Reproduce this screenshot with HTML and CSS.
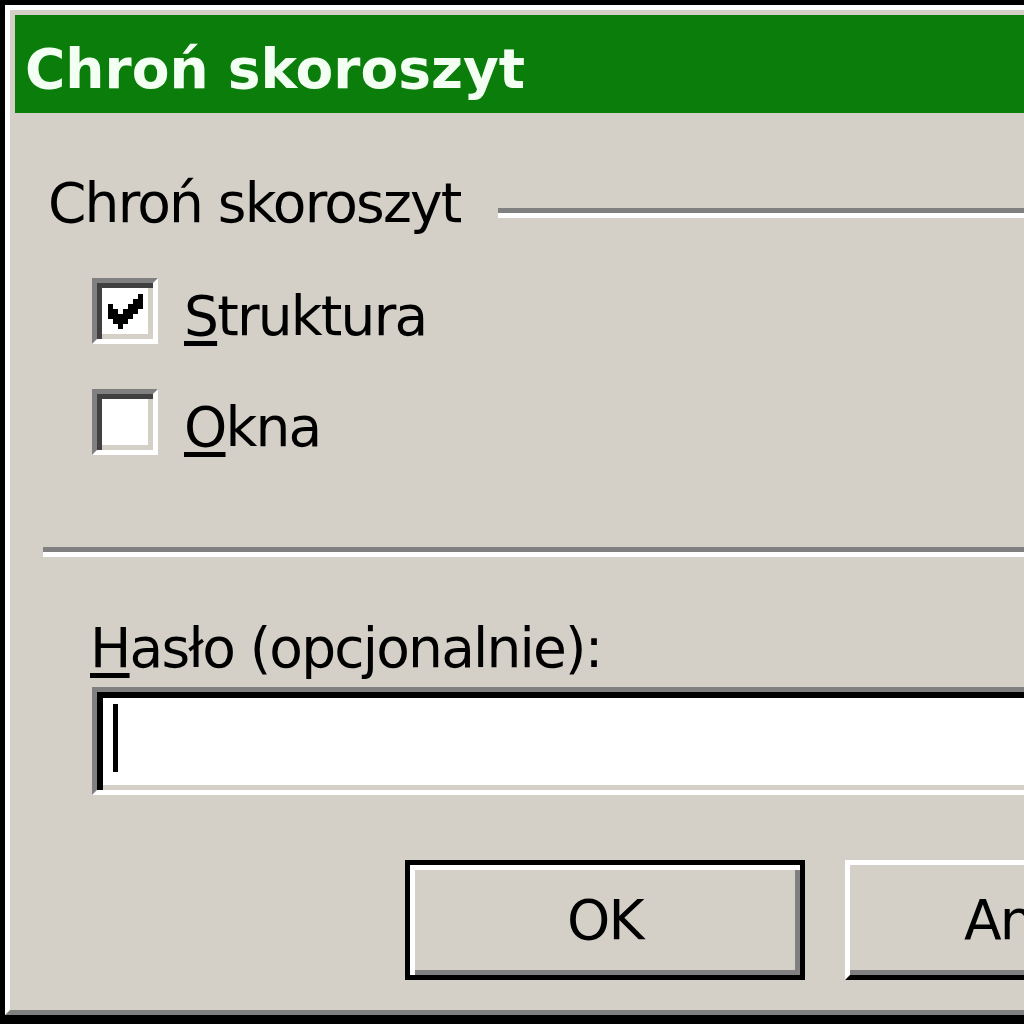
FILE: index.html
```html
<!DOCTYPE html>
<html lang="pl">
<head>
  <meta charset="UTF-8" />
  <title>Chroń skoroszyt</title>
  <link rel="stylesheet" href="styles.css">
</head>
<body>
  <div class="window">
    <div class="frame">
      <div class="titlebar">Chroń skoroszyt</div>

      <div class="content">
        <!-- grupa z opcjami -->
        <div class="group-head">
          <span class="group-label">Chroń skoroszyt</span>
          <span class="etched"></span>
        </div>

        <div class="options">
          <label class="option">
            <span class="box">
              <svg class="check" viewBox="0 0 7 7" width="35" height="35" shape-rendering="crispEdges">
                <rect x="6" y="0" width="1" height="1"/>
                <rect x="5" y="1" width="2" height="1"/>
                <rect x="0" y="2" width="1" height="1"/>
                <rect x="4" y="2" width="3" height="1"/>
                <rect x="0" y="3" width="2" height="1"/>
                <rect x="3" y="3" width="3" height="1"/>
                <rect x="0" y="4" width="5" height="1"/>
                <rect x="1" y="5" width="3" height="1"/>
                <rect x="2" y="6" width="1" height="1"/>
              </svg>
            </span>
            <span class="option-text"><u>S</u>truktura</span>
          </label>
          <label class="option">
            <span class="box"></span>
            <span class="option-text"><u>O</u>kna</span>
          </label>
        </div>

        <div class="separator"></div>

        <div class="field-label"><u>H</u>asło (opcjonalnie):</div>
        <div class="input"><span class="caret"></span></div>

        <div class="buttons">
          <button class="btn default">OK</button>
          <button class="btn">Anuluj</button>
        </div>
      </div>
    </div>
  </div>
</body>
</html>
```

FILE: styles.css
```css
html, body {
  margin: 0;
  padding: 0;
  overflow: hidden;
}

body {
  font-family: "DejaVu Sans", Verdana, sans-serif;
  background-color: #d4d0c8;
}

.window {
  height: 1024px;
  box-sizing: border-box;
  border-top: 5px solid #000;
  border-left: 5px solid #000;
  border-bottom: 9px solid #000;
  display: flex;
  flex-direction: column;
}

.frame {
  flex: 1;
  border-top: 5px solid #fff;
  border-left: 5px solid #fff;
  border-bottom: 5px solid #808080;
  padding: 5px 0 0 5px;
  background-color: #d4d0c8;
}

.titlebar {
  height: 98px;
  box-sizing: border-box;
  padding: 10px 0 0 10px;
  line-height: 88px;
  background-color: #0b7d0b;
  color: #f4fff4;
  font-weight: bold;
  font-size: 55px;
  white-space: nowrap;
}

.content {
  font-size: 55px;
  letter-spacing: -1.8px;
  color: #000;
}

.content u {
  text-decoration-thickness: 5px;
  text-underline-offset: 6px;
}

.group-head {
  display: flex;
  align-items: flex-start;
  margin-top: 60px;
  padding-left: 33px;
}

.group-label {
  line-height: 60px;
  white-space: nowrap;
}

.etched {
  flex: 1;
  margin: 35px 0 0 37px;
  border-top: 5px solid #808080;
  border-bottom: 5px solid #fff;
}

.options {
  display: flex;
  flex-direction: column;
  gap: 43px;
  margin-top: 45px;
  padding-left: 77px;
}

.option {
  display: flex;
  align-items: flex-start;
  gap: 26px;
}

.box {
  width: 66px;
  height: 66px;
  box-sizing: border-box;
  border-top: 5px solid #808080;
  border-left: 5px solid #808080;
  border-bottom: 5px solid #fff;
  border-right: 5px solid #fff;
  background-color: #fff;
  box-shadow: inset 5px 5px 0 #404040, inset -5px -5px 0 #d4d0c8;
  display: flex;
  align-items: center;
  justify-content: center;
}

.check {
  display: block;
  fill: #000;
}

.option-text {
  margin-top: 8px;
  line-height: 60px;
}

.separator {
  margin: 90px 0 0 28px;
  border-top: 5px solid #808080;
  border-bottom: 5px solid #fff;
}

.field-label {
  margin-top: 61px;
  padding-left: 75px;
  line-height: 60px;
  white-space: nowrap;
}

.input {
  width: 1100px;
  height: 108px;
  box-sizing: border-box;
  margin: 9px 0 0 77px;
  border-top: 5px solid #808080;
  border-left: 5px solid #808080;
  border-bottom: 5px solid #fff;
  border-right: 5px solid #fff;
  background-color: #fff;
  box-shadow: inset 6px 6px 0 #000, inset 0 -5px 0 #d4d0c8;
  padding: 12px 0 0 16px;
}

.caret {
  display: block;
  width: 5px;
  height: 68px;
  background-color: #000;
}

.buttons {
  display: flex;
  gap: 40px;
  margin-top: 65px;
  padding-left: 390px;
}

.btn {
  flex: none;
  width: 400px;
  height: 120px;
  box-sizing: border-box;
  font-family: inherit;
  font-size: 55px;
  letter-spacing: -1.8px;
  color: #000;
  background-color: #d4d0c8;
  border-top: 5px solid #fff;
  border-left: 5px solid #fff;
  border-bottom: 5px solid #000;
  border-right: 5px solid #000;
  box-shadow: inset -5px -5px 0 #808080;
  padding: 0;
}

.btn.default {
  border: 5px solid #000;
  box-shadow: inset 5px 5px 0 #fff, inset -5px -5px 0 #808080;
}
```
